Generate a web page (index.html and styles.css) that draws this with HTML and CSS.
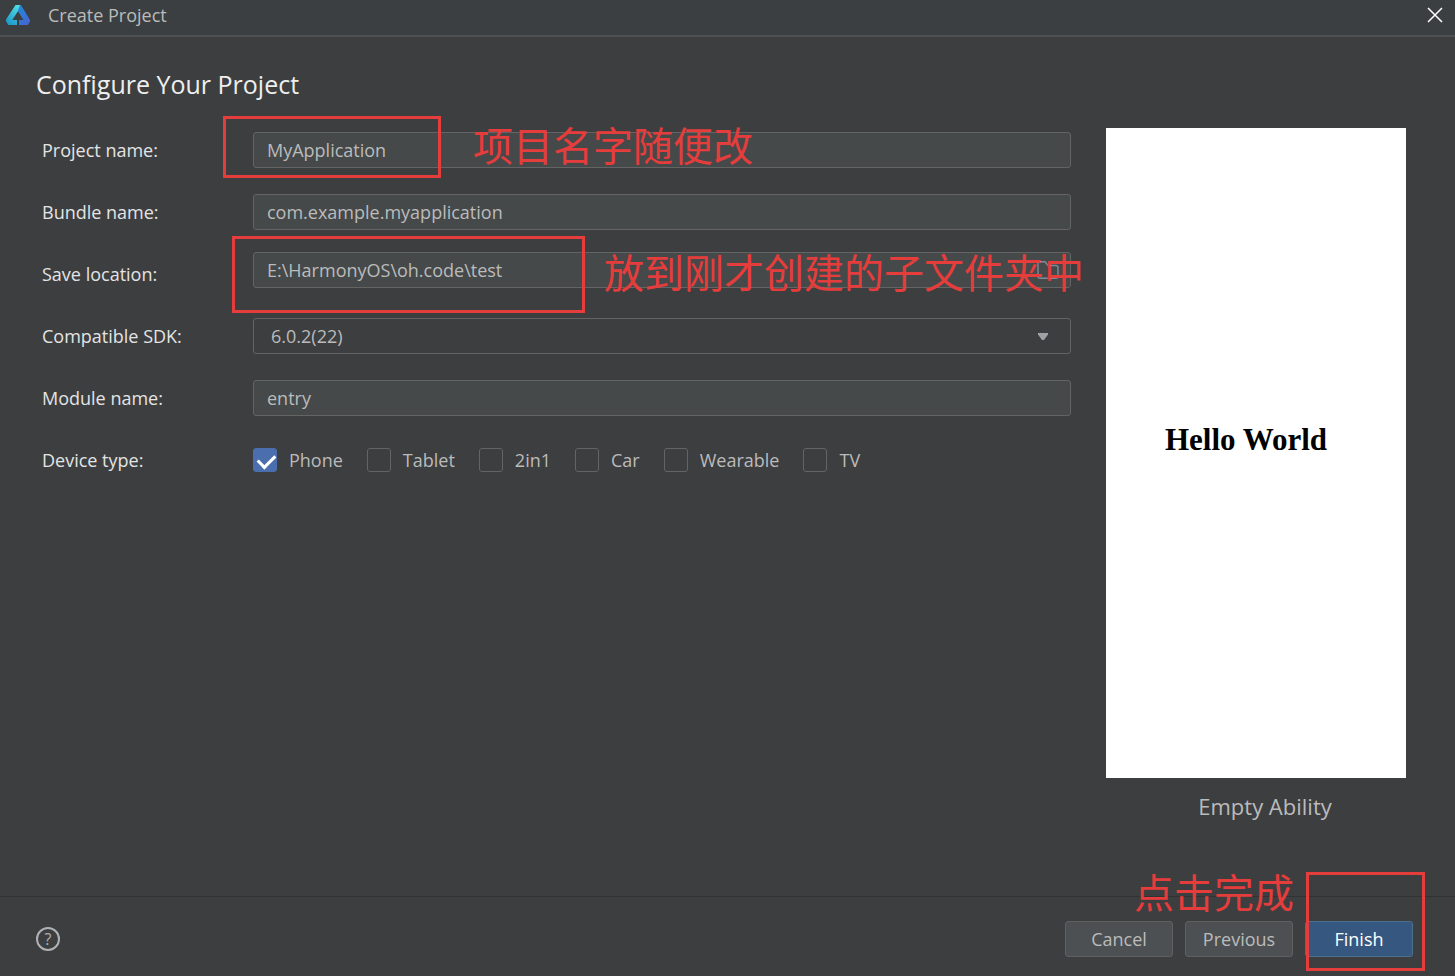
FILE: index.html
```html
<!DOCTYPE html>
<html lang="zh-CN">
<head>
    <meta charset="UTF-8">
    <meta name="viewport" content="width=device-width, initial-scale=1.0">
    <title>Create Project</title>
    <link rel="stylesheet" href="styles.css">
</head>
<body>
    <header class="title-bar">
        <svg class="app-logo" width="24" height="20" viewBox="0 0 24 20">
            <defs>
                <linearGradient id="logoLeft" x1="0.7" y1="0" x2="0.2" y2="1">
                    <stop offset="0" stop-color="#4fdde0"/>
                    <stop offset="1" stop-color="#1c97cc"/>
                </linearGradient>
                <linearGradient id="logoRight" x1="0.2" y1="0" x2="0.8" y2="1">
                    <stop offset="0" stop-color="#2489dc"/>
                    <stop offset="1" stop-color="#4465d0"/>
                </linearGradient>
            </defs>
            <path d="M9.5 0H14L15 1.5L6.3 15H11V20H2.2L0 16V14.5Z" fill="url(#logoLeft)"/>
            <path d="M14 0L15.5 1L24 15V16.5L22 20H13V15H17.5L11.8 6Z" fill="url(#logoRight)"/>
        </svg>
        <span class="title-text">Create Project</span>
        <button class="close-btn" type="button" aria-label="Close">
            <svg width="16" height="16" viewBox="0 0 16 16">
                <path d="M1 1L15 15M15 1L1 15" stroke="#fff" stroke-width="1.5" fill="none"/>
            </svg>
        </button>
    </header>

    <main class="content">
        <h1 class="page-title">Configure Your Project</h1>

        <div class="columns">
            <form class="project-form" id="projectForm">
                <div class="form-row">
                    <label class="row-label" for="projectName">Project name:</label>
                    <div class="field">
                        <input class="text-input" type="text" id="projectName" value="MyApplication">
                    </div>
                    <span class="mark-box mark-name"></span>
                    <span class="mark-text note-name">项目名字随便改</span>
                </div>

                <div class="form-row">
                    <label class="row-label" for="bundleName">Bundle name:</label>
                    <div class="field">
                        <input class="text-input" type="text" id="bundleName" value="com.example.myapplication">
                    </div>
                </div>

                <div class="form-row">
                    <label class="row-label" for="saveLocation">Save location:</label>
                    <div class="field path-field">
                        <input class="text-input" type="text" id="saveLocation" value="E:\HarmonyOS\oh.code\test">
                        <button class="browse-btn" type="button" aria-label="Browse">
                            <svg width="22" height="18" viewBox="0 0 22 18">
                                <path d="M1 2.5Q1 .7 3 .7H8L11 4.5H19Q21 4.5 21 6.5V15.3Q21 17.3 19 17.3H3Q1 17.3 1 15.3Z" fill="none" stroke="#7f8b98" stroke-width="1.4"/>
                            </svg>
                        </button>
                    </div>
                    <span class="mark-box mark-path"></span>
                    <span class="mark-text note-path">放到刚才创建的子文件夹中</span>
                </div>

                <div class="form-row">
                    <label class="row-label" for="sdk">Compatible SDK:</label>
                    <div class="field">
                        <select class="select-input" id="sdk">
                            <option>6.0.2(22)</option>
                        </select>
                        <svg class="select-arrow" width="10" height="7" viewBox="0 0 10 7">
                            <path d="M0 0H10V1.5L6 7H4L0 1.5Z" fill="#9fa1a5"/>
                        </svg>
                    </div>
                </div>

                <div class="form-row">
                    <label class="row-label" for="moduleName">Module name:</label>
                    <div class="field">
                        <input class="text-input" type="text" id="moduleName" value="entry">
                    </div>
                </div>

                <div class="form-row" role="group" aria-labelledby="deviceType">
                    <span class="row-label" id="deviceType">Device type:</span>
                    <div class="field device-list">
                        <label class="device"><input type="checkbox" checked>Phone</label>
                        <label class="device"><input type="checkbox">Tablet</label>
                        <label class="device"><input type="checkbox">2in1</label>
                        <label class="device"><input type="checkbox">Car</label>
                        <label class="device"><input type="checkbox">Wearable</label>
                        <label class="device"><input type="checkbox">TV</label>
                    </div>
                </div>
            </form>

            <aside class="preview">
                <div class="preview-screen">Hello World</div>
                <div class="preview-name">Empty Ability</div>
            </aside>
        </div>
    </main>

    <footer class="footer">
        <button class="help-btn" type="button" aria-label="Help">?</button>
        <div class="actions">
            <button class="btn" type="button">Cancel</button>
            <button class="btn" type="button">Previous</button>
            <button class="btn btn-primary" type="submit" form="projectForm">Finish</button>
            <span class="mark-box mark-finish"></span>
            <span class="mark-text note-finish">点击完成</span>
        </div>
    </footer>
</body>
</html>
```

FILE: styles.css
```css
* { margin: 0; padding: 0; box-sizing: border-box; }

body {
    display: flex;
    flex-direction: column;
    min-height: 100vh;
    background: #3d3e40;
    color: #bbbbbb;
    font-family: 'Segoe UI', 'Open Sans', 'Noto Sans CJK SC', sans-serif;
    font-size: 18px;
    line-height: 24px;
}

button, input, select {
    font: inherit;
    color: inherit;
}

button { cursor: pointer; }

/* title bar */
.title-bar {
    display: flex;
    align-items: center;
    height: 37px;
    padding: 0 12px 6px 6px;
    background: #3c3f41;
    border-bottom: 2px solid #515151;
}

.title-text {
    margin-left: 18px;
}

.close-btn {
    display: flex;
    margin-left: auto;
    background: none;
    border: none;
}

/* content */
.content {
    flex: 1;
    padding: 31px 49px 0 36px;
}

.page-title {
    color: #eeeeee;
    font-size: 25px;
    font-weight: 400;
    line-height: 32px;
}

.columns {
    display: flex;
    align-items: flex-start;
    gap: 35px;
    padding-top: 19px;
}

.project-form {
    flex: 1;
    padding-left: 6px;
}

.form-row {
    position: relative;
    display: flex;
    align-items: center;
    height: 62px;
}

.row-label {
    width: 211px;
    color: #e4e4e4;
}

.field {
    position: relative;
    flex: 1;
}

.text-input,
.select-input {
    display: block;
    width: 100%;
    height: 36px;
    border: 1px solid #646464;
    border-radius: 3px;
    outline: none;
}

.text-input {
    padding: 0 13px;
    background: #45494a;
}

.select-input {
    padding: 0 17px;
    background: transparent;
    appearance: none;
}

.select-arrow {
    position: absolute;
    top: 15px;
    right: 23px;
    pointer-events: none;
}

.path-field {
    padding-bottom: 8px;
}

.browse-btn {
    position: absolute;
    top: 9px;
    right: 12px;
    display: flex;
    background: none;
    border: none;
}

.device-list {
    display: flex;
    gap: 24px;
}

.device {
    display: flex;
    align-items: center;
    gap: 12px;
}

.device input {
    position: relative;
    width: 24px;
    height: 24px;
    border: 1px solid #646464;
    border-radius: 3px;
    appearance: none;
}

.device input:checked {
    background: #4b6eaf;
    border-color: #4b6eaf;
}

.device input:checked::after {
    content: '';
    position: absolute;
    top: 5px;
    left: 4px;
    width: 14px;
    height: 8px;
    border: solid #ffffff;
    border-width: 0 0 3px 3px;
    transform: rotate(-45deg);
}

/* preview */
.preview {
    width: 300px;
    padding-top: 9px;
    text-align: center;
}

.preview-screen {
    display: flex;
    align-items: center;
    justify-content: center;
    height: 650px;
    padding: 0 20px 26px 0;
    background: #ffffff;
    color: #000000;
    font-family: 'Liberation Serif', serif;
    font-size: 31px;
    font-weight: 700;
}

.preview-name {
    padding: 12px 0 0 18px;
    font-size: 22px;
    line-height: 32px;
}

/* footer */
.footer {
    display: flex;
    align-items: center;
    justify-content: space-between;
    padding: 24px 42px 19px 36px;
    border-top: 1px solid #323232;
}

.help-btn {
    width: 24px;
    height: 24px;
    border: 2px solid #afb1b3;
    border-radius: 50%;
    background: none;
    color: #afb1b3;
    font-size: 16px;
    line-height: 20px;
}

.actions {
    position: relative;
    display: flex;
    gap: 12px;
}

.btn {
    width: 108px;
    height: 36px;
    border: 1px solid #5e6060;
    border-radius: 3px;
    background: #4c5052;
}

.btn-primary {
    border-color: #4c708c;
    background: #365880;
    color: #ffffff;
}

/* red annotations */
.mark-box,
.mark-text {
    position: absolute;
    pointer-events: none;
}

.mark-box {
    border: 3px solid #e53c3c;
}

.mark-text {
    color: #e53c3c;
    font-family: 'Noto Sans CJK SC', sans-serif;
    font-size: 40px;
    line-height: 48px;
    white-space: nowrap;
}

.mark-name {
    top: -3px;
    left: 181px;
    width: 218px;
    height: 62px;
}

.note-name {
    top: 1px;
    left: 431px;
}

.mark-path {
    top: -7px;
    left: 190px;
    width: 353px;
    height: 77px;
}

.note-path {
    top: 4px;
    left: 562px;
}

.mark-finish {
    top: -49px;
    right: -12px;
    width: 119px;
    height: 99px;
}

.note-finish {
    right: 119px;
    bottom: 42px;
}
```
